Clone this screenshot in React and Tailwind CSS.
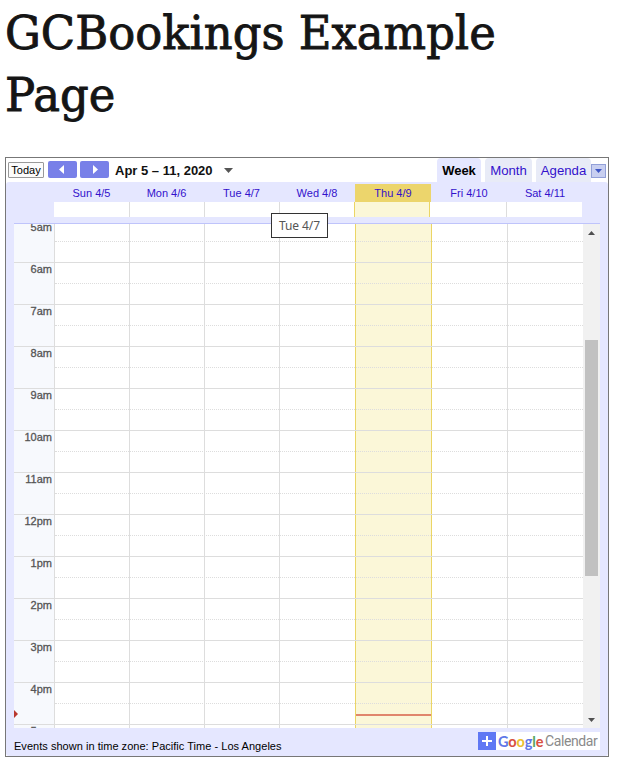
import React from "react";

const days = [
  { label: "Sun 4/5", head: "w-[75px]", allDay: "w-[76px]", col: "w-[75px]" },
  { label: "Mon 4/6", head: "w-[75px]", allDay: "w-[75px]", col: "w-[75px]" },
  { label: "Tue 4/7", head: "w-[75px]", allDay: "w-[75px]", col: "w-[75px]" },
  { label: "Wed 4/8", head: "w-[76px]", allDay: "w-[75px]", col: "w-[76px]" },
  { label: "Thu 4/9", head: "w-[76px]", allDay: "w-[75px]", col: "w-[76px]", today: true },
  { label: "Fri 4/10", head: "w-[76px]", allDay: "w-[77px]", col: "w-[76px]" },
  { label: "Sat 4/11", head: "w-[76px]", allDay: "w-[75px]", col: "w-[75px]", last: true },
];

const hours = ["5am", "6am", "7am", "8am", "9am", "10am", "11am", "12pm", "1pm", "2pm", "3pm", "4pm", "5pm"];

function NavButton({ d }) {
  return (
    <button className="flex h-[17px] w-[29px] items-center justify-center rounded-[2px] bg-[#7880e8]">
      <svg width="29" height="17" viewBox="0 0 29 17">
        <path d={d} fill="#fff" />
      </svg>
    </button>
  );
}

function Toolbar() {
  return (
    <div className="flex h-[24px] bg-white">
      <button className="mt-[4px] ml-[2px] flex h-[16px] w-[36px] items-center justify-center rounded-[1px] border border-[#999] bg-[#fbfbfb] text-[11px] whitespace-nowrap text-black">
        Today
      </button>
      <div className="mt-[3px] ml-[4px] flex gap-[3px]">
        <NavButton d="M11 8.5 L16 4 V13 Z" />
        <NavButton d="M18 8.5 L13 4 V13 Z" />
      </div>
      <div className="mt-[5px] ml-[6px] w-[109px] text-[13px] leading-[16px] font-bold whitespace-nowrap text-[#111]">
        Apr 5 – 11, 2020
      </div>
      <svg className="mt-[10px]" width="9" height="5" viewBox="0 0 9 5">
        <path d="M0 0H9L4.5 5Z" fill="#555" />
      </svg>
      <div className="ml-auto flex gap-[4px] text-[13.2px] leading-[26px] text-[#3311cc]">
        <div className="h-[24px] w-[44px] rounded-t-[4px] bg-[#e5e7ff] text-center text-[13px] font-bold text-black">Week</div>
        <div className="h-[24px] w-[47px] rounded-t-[4px] bg-[#e8ebf7] text-center">Month</div>
        <div className="h-[24px] w-[55px] rounded-t-[4px] bg-[#e8ebf7] text-center">Agenda</div>
      </div>
      <div className="mt-[6px] mr-[2px] flex h-[14px] w-[15px] items-center justify-center border border-[#92a0d8] bg-[#c8cff0]">
        <svg width="7" height="4" viewBox="0 0 7 4">
          <path d="M0 0H7L3.5 4Z" fill="#3d55c5" />
        </svg>
      </div>
    </div>
  );
}

function DayHeader() {
  return (
    <>
      <div className="flex h-[18px] pl-[40px] text-[11px] leading-[19px] text-[#3311cc]">
        {days.map((d) => (
          <div key={d.label} className={`${d.head} ${d.today ? "bg-[#ecd56c]" : ""} text-center whitespace-nowrap`}>
            {d.label}
          </div>
        ))}
      </div>
      <div className="flex h-[15px] pl-[40px]">
        {days.map((d, i) => (
          <div
            key={d.label}
            className={`${d.allDay} ${d.today ? "bg-[#fbf7d8]" : "bg-white"} ${
              d.last ? "" : d.today || i === 3 ? "border-r border-[#ebd565]" : "border-r border-[#ddd]"
            }`}
          />
        ))}
      </div>
    </>
  );
}

function TimeGrid() {
  return (
    <div className="relative mt-[6px] h-[505px] w-[586px] overflow-hidden border-t border-[#bfc4fb]">
      <div className="flex h-[504px]">
        <div className="-mt-[4px] w-[40px] bg-[#f7f9fd] text-right text-[11px] text-[#555] [-webkit-text-stroke:0.3px_#555]">
          {hours.map((h) => (
            <div key={h} className="h-[42px] border-t border-[#ddd] pr-[2px] leading-[13px]">
              {h}
            </div>
          ))}
        </div>
        <div className="relative flex w-[529px] border-l border-[#ddd]">
          {days.map((d, i) => (
            <div
              key={d.label}
              className={`${d.col} shrink-0 ${d.today ? "bg-[#fbf7d8]" : "bg-white"} ${
                d.last ? "" : d.today || i === 3 ? "border-r border-[#ebd565]" : "border-r border-[#ddd]"
              }`}
            />
          ))}
          <div className="absolute inset-x-0 -top-[4px]">
            {hours.map((h) => (
              <div key={h} className="h-[42px] border-t border-[#ddd]">
                <div className="h-[21px] border-b border-dotted border-[#ddd]" />
              </div>
            ))}
          </div>
          <div className="absolute top-[490px] left-[301px] h-[2px] w-[75px] bg-[#e0866c]" />
        </div>
        <div className="flex w-[17px] flex-col items-center bg-[#f1f1f1]">
          <svg className="mt-[7px]" width="7" height="4" viewBox="0 0 7 4">
            <path d="M0 4H7L3.5 0Z" fill="#505050" />
          </svg>
          <div className="mt-[105px] h-[236px] w-[13px] bg-[#c1c1c1]" />
          <svg className="mt-[142px]" width="7" height="4" viewBox="0 0 7 4">
            <path d="M0 0H7L3.5 4Z" fill="#505050" />
          </svg>
        </div>
      </div>
      <svg className="absolute top-[486px] left-0" width="4" height="8" viewBox="0 0 4 8">
        <path d="M0 0L4 4L0 8Z" fill="#b8372f" />
      </svg>
    </div>
  );
}

function Footer() {
  return (
    <div className="flex h-[28px] justify-between">
      <div className="mt-[12px] text-[11px] leading-[13px] tracking-[0.03px] whitespace-nowrap text-black">
        Events shown in time zone: Pacific Time - Los Angeles
      </div>
      <div className="mt-[4px] mr-[8px] flex h-[18px] w-[122px] bg-white">
        <div className="flex w-[18px] shrink-0 items-center justify-center bg-[#6078f4]">
          <svg width="10" height="10" viewBox="0 0 10 10">
            <path d="M4 0H6V4H10V6H6V10H4V6H0V4H4Z" fill="#fff" />
          </svg>
        </div>
        <div className="flex pl-[2px] leading-[19px] whitespace-nowrap">
          <span className="w-[47px] font-['Lato'] text-[14.5px] font-bold tracking-[-0.1px]">
            <span className="text-[#6078e8]">G</span>
            <span className="text-[#d85040]">o</span>
            <span className="text-[#ecc030]">o</span>
            <span className="text-[#6078e8]">g</span>
            <span className="text-[#58a860]">l</span>
            <span className="text-[#d85040]">e</span>
          </span>
          <span className="font-['Roboto'] text-[14px] tracking-[-0.4px] text-[#8a8a8a]">Calendar</span>
        </div>
      </div>
    </div>
  );
}

export default function App() {
  return (
    <div className="h-[771px] w-[620px] overflow-hidden bg-white pl-[5px] font-['Liberation_Sans',Arial,sans-serif]">
      <h1 className="h-[157px] pt-[2px] font-['DejaVu_Serif',serif] text-[47px] leading-[62px] whitespace-nowrap text-[#151515] [-webkit-text-stroke:0.9px_#151515]">
        <span className="block w-max origin-left scale-x-[0.955]">GCBookings Example</span>
        <span className="block w-max origin-left scale-x-[0.955]">Page</span>
      </h1>
      <div className="relative h-[600px] w-[604px] border border-[#777]">
        <Toolbar />
        <div className="h-[574px] rounded-[3px] bg-[#e5e7ff] pt-[2px] pl-[8px]">
          <DayHeader />
          <TimeGrid />
          <Footer />
        </div>
        <div className="absolute top-[55px] left-[265px] flex h-[25px] w-[57px] items-center justify-center border border-[#333] bg-white font-['Noto_Sans'] text-[12px] tracking-[-0.1px] text-[#555]">
          Tue 4/7
        </div>
      </div>
    </div>
  );
}
